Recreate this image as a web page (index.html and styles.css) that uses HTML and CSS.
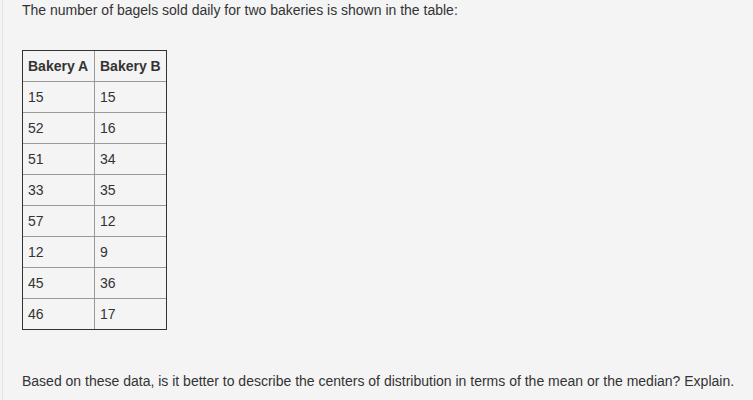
FILE: index.html
```html
<!DOCTYPE html>
<html>
<head>
<meta charset="utf-8">
<link rel="stylesheet" href="styles.css">
</head>
<body>
<div class="panel">
  <p class="intro">The number of bagels sold daily for two bakeries is shown in the table:</p>
  <table class="data">
    <thead>
      <tr><th>Bakery A</th><th>Bakery B</th></tr>
    </thead>
    <tbody>
      <tr><td>15</td><td>15</td></tr>
      <tr><td>52</td><td>16</td></tr>
      <tr><td>51</td><td>34</td></tr>
      <tr><td>33</td><td>35</td></tr>
      <tr><td>57</td><td>12</td></tr>
      <tr><td>12</td><td>9</td></tr>
      <tr><td>45</td><td>36</td></tr>
      <tr><td>46</td><td>17</td></tr>
    </tbody>
  </table>
  <p class="question">Based on these data, is it better to describe the centers of distribution in terms of the mean or the median? Explain.</p>
</div>
</body>
</html>
```

FILE: styles.css
```css
html, body {
  margin: 0;
  padding: 0;
  background: #f4f4f4;
  height: 100%;
}
body {
  font-family: "Liberation Sans", Arial, sans-serif;
  font-size: 14px;
  color: #333;
  padding-left: 2px;
  box-sizing: border-box;
}
.panel {
  border-left: 1px solid #e4e4e4;
  padding-left: 19px;
  height: 100%;
  box-sizing: border-box;
}
.intro {
  margin: 0;
  line-height: 20px;
}
.data {
  margin-top: 30px;
  border-collapse: separate;
  border-spacing: 0;
  border: 1px solid #333;
  table-layout: fixed;
}
.data th, .data td {
  width: 66px;
  padding: 0 0 0 5px;
  text-align: left;
  vertical-align: middle;
  white-space: nowrap;
}
.data th {
  font-weight: bold;
  height: 30px;
}
.data td {
  border-top: 1px solid #999;
  height: 30px;
}
.data th + th, .data td + td {
  border-left: 1px solid #999;
}
.question {
  margin: 41px 0 0;
  line-height: 20px;
}
```
